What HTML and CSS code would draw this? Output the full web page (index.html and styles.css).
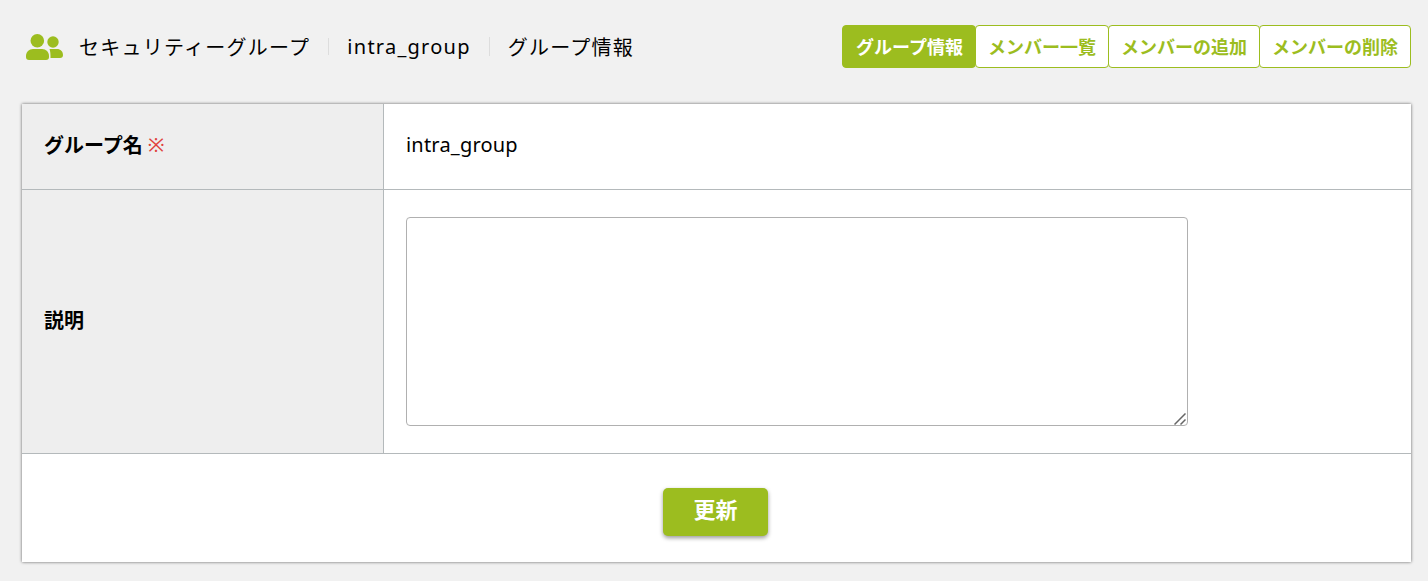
FILE: index.html
```html
<!DOCTYPE html>
<html lang="ja">
<head>
    <meta charset="UTF-8">
    <title>グループ情報</title>
    <link rel="stylesheet" href="styles.css">
</head>
<body>
<header class="page-head">
    <div class="crumbs">
        <svg class="crumb-icon" viewBox="0 0 37 27" width="37" height="27" aria-hidden="true">
            <circle cx="11.300" cy="7.800" r="6.800" fill="#9cbd1f"/>
            <circle cx="27" cy="9" r="5.700" fill="#9cbd1f"/>
            <path d="M0 23c0-4 3-7 7-7h9c4 0 7 3 7 7v1c0 2-1 3-3 3H3c-2 0-3-1-3-3z" fill="#9cbd1f"/>
            <path d="M23.500 16H31c3.500 0 6 2.500 6 6 0 2-1 3-3 3h-9.500v-2c0-3-.3-5-1-7z" fill="#9cbd1f"/>
        </svg>
        <span class="crumb">セキュリティーグループ</span>
        <span class="crumb crumb-sep">intra_group</span>
        <span class="crumb crumb-sep">グループ情報</span>
    </div>
    <nav class="tabs">
        <a class="tab active">グループ情報</a>
        <a class="tab">メンバー一覧</a>
        <a class="tab">メンバーの追加</a>
        <a class="tab">メンバーの削除</a>
    </nav>
</header>

<main class="panel">
    <div class="row row-name">
        <div class="label">グループ名 <span class="req">※</span></div>
        <div class="value">intra_group</div>
    </div>
    <div class="row row-desc">
        <div class="label">説明</div>
        <div class="value">
            <div class="desc-wrap">
                <textarea class="desc-input"></textarea>
                <svg class="desc-grip" viewBox="0 0 12 12" width="12" height="12" aria-hidden="true">
                    <path d="M0.500 11.500L11.500 0.500M6.500 11.500L11.500 6.500" stroke="#666" stroke-width="1.500" fill="none"/>
                </svg>
            </div>
        </div>
    </div>
    <div class="actions">
        <button class="save-btn">更新</button>
    </div>
</main>
</body>
</html>
```

FILE: styles.css
```css
body {
    font-family: "Noto Sans", "Noto Sans CJK JP", sans-serif;
    margin: 0;
    padding: 0 17px 0 22px;
    height: 581px;
    box-sizing: border-box;
    overflow: hidden;
    background: #f1f1f1;
    color: #000;
}

.page-head {
    height: 104px;
    display: flex;
    justify-content: space-between;
    padding: 25px 0 0;
    box-sizing: border-box;
}

.crumbs {
    display: flex;
    align-items: center;
    height: 44px;
    margin-left: 4px;
    padding-bottom: 1px;
    box-sizing: border-box;
    font-size: 20px;
    letter-spacing: 1.25px;
}

.crumb-icon {
    margin-right: 16px;
}

.crumb-sep {
    margin-left: 18px;
    padding-left: 19px;
    position: relative;
}

.crumb-sep::before {
    content: "";
    position: absolute;
    left: 0;
    top: 5px;
    bottom: 5px;
    width: 1px;
    background: #ddd;
}

.tabs {
    display: flex;
    height: 43px;
}

.tab {
    display: flex;
    align-items: center;
    padding: 0 12px 2px;
    font-size: 18px;
    font-weight: 700;
    color: #9cbd1f;
    background: #fff;
    border: 1px solid #9cbd1f;
    margin-left: -1px;
    border-radius: 4px;
}

.tab.active {
    color: #fff;
    background: #9cbd1f;
    margin-left: 0;
    padding-left: 13px;
}

.panel {
    background: #fff;
    height: 458px;
    box-shadow: 0 0 3px rgba(0, 0, 0, 0.6);
    display: flex;
    flex-direction: column;
}

.row {
    display: flex;
    border-bottom: 1px solid #b4b9bb;
}

.row-name {
    height: 86px;
    box-sizing: border-box;
}

.row-desc {
    height: 264px;
    box-sizing: border-box;
}

.label {
    width: 362px;
    flex-shrink: 0;
    box-sizing: border-box;
    padding: 0 0 5px 22px;
    display: flex;
    align-items: center;
    gap: 5px;
    font-size: 20px;
    font-weight: 700;
    background: #eeeeee;
    border-right: 1px solid #b4b9bb;
}

.req {
    color: #e0413c;
    font-weight: 400;
}

.value {
    flex: 1;
    padding: 0 0 5px 22px;
    display: flex;
    align-items: center;
    font-size: 20px;
    letter-spacing: 0.2px;
}

.row-desc .value {
    padding-bottom: 0;
}

.desc-wrap {
    position: relative;
}

.desc-input {
    display: block;
    width: 782px;
    height: 209px;
    box-sizing: border-box;
    border: 1px solid #b0b0b0;
    border-radius: 4px;
    background: #fff;
    margin: 0;
    resize: none;
}

.desc-grip {
    position: absolute;
    right: 2px;
    bottom: 1px;
    pointer-events: none;
}

.actions {
    flex: 1;
    display: flex;
    justify-content: center;
    padding: 34px 2px 0 0;
}

.save-btn {
    width: 105px;
    height: 48px;
    padding: 0 0 9px;
    background: #9cbd1f;
    color: #fff;
    border: none;
    border-radius: 5px;
    font-family: inherit;
    font-size: 22px;
    font-weight: 700;
    box-shadow: 0 2px 4px rgba(0, 0, 0, 0.4);
    cursor: pointer;
}
```
